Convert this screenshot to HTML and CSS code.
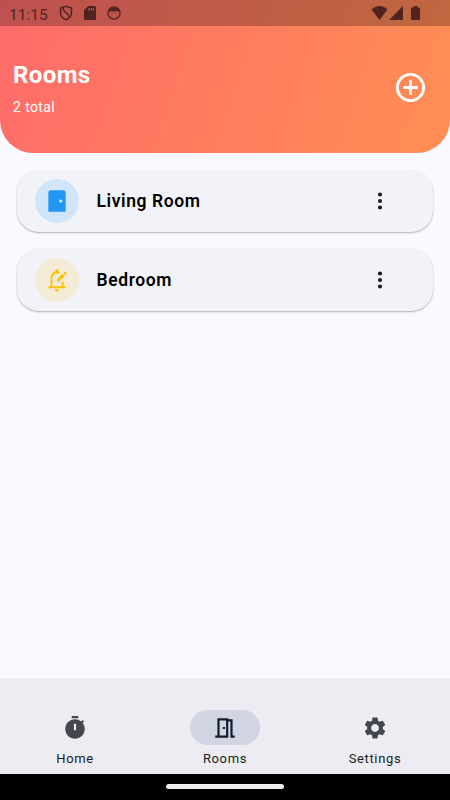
FILE: index.html
```html
<!DOCTYPE html>
<html lang="en">
<head>
    <meta charset="UTF-8">
    <meta name="viewport" content="width=device-width, initial-scale=1.0">
    <title>Rooms</title>
    <link rel="stylesheet" href="styles.css">
</head>
<body>

<header class="header">
    <div class="status-bar">
        <span class="time">11:15</span>
        <svg class="status-shield" viewBox="0 0 14 16" fill="none" stroke="currentColor" stroke-width="1.5">
            <path d="M7 1.200 1.500 3v4.500c0 3.500 2.200 6 5.500 7.300 3.300-1.300 5.500-3.800 5.500-7.300V3Z"/>
            <path d="M4 2.500C3.500 8 9.500 6.500 10.500 12.500"/>
        </svg>
        <svg class="status-sd" viewBox="0 0 12 14" fill="currentColor">
            <path fill-rule="evenodd" d="M4.200 0H10.500Q12 0 12 1.500V12.500Q12 14 10.500 14H1.500Q0 14 0 12.500V4.200ZM4.500 2v2.500h1.200V2ZM6.800 2v2.500H8V2ZM9 2v2.500h1.200V2Z"/>
        </svg>
        <svg class="status-face" viewBox="0 0 14 14">
            <circle cx="7" cy="7" r="6.100" fill="none" stroke="currentColor" stroke-width="1.300"/>
            <path d="M2 6Q1.800 2 7 1.500 12.200 2 12 6L9.500 5 7 5.800 4.500 5Z" fill="currentColor"/>
            <path d="M4.500 7.500h1M8.500 7.500h1" stroke="currentColor" stroke-width=".8"/>
        </svg>
        <div class="status-right">
            <svg class="status-wifi" viewBox="0 0 16 14" fill="currentColor"><path d="M8 14 0 3.600Q3.500 0 8 0t8 3.600Z"/></svg>
            <svg class="status-signal" viewBox="0 0 14 14" fill="currentColor"><path d="M0 14 14 0v14Z"/></svg>
            <svg class="status-battery" viewBox="0 0 9 14" fill="currentColor"><path d="M2.500 0h4v1.500H8q1 0 1 1V13q0 1-1 1H1q-1 0-1-1V2.500q0-1 1-1h1.500Z"/></svg>
        </div>
    </div>
    <div class="header-content">
        <div>
            <h1>Rooms</h1>
            <p>2 total</p>
        </div>
        <button class="add" aria-label="Add room">
            <svg viewBox="0 0 24 24" fill="currentColor"><path d="M13 7h-2v4H7v2h4v4h2v-4h4v-2h-4V7zm-1-5C6.480 2 2 6.480 2 12s4.480 10 10 10 10-4.480 10-10S17.520 2 12 2zm0 18c-4.410 0-8-3.590-8-8s3.590-8 8-8 8 3.590 8 8-3.590 8-8 8z"/></svg>
        </button>
    </div>
</header>

<main class="rooms">
    <div class="room">
        <div class="avatar blue">
            <svg class="icon" viewBox="0 0 24 24" fill="currentColor"><path d="M20 4c0-1.100-.9-2-2-2H6c-1.100 0-2 .9-2 2v18h16V4zm-4.500 9.500c-.83 0-1.500-.67-1.500-1.500s.67-1.500 1.500-1.500 1.500.67 1.500 1.500-.67 1.500-1.500 1.500z"/></svg>
        </div>
        <span class="room-name">Living Room</span>
        <button class="more" aria-label="More">
            <svg class="icon" viewBox="0 0 24 24" fill="currentColor"><circle cx="12" cy="6" r="1.900"/><circle cx="12" cy="12" r="1.900"/><circle cx="12" cy="18" r="1.900"/></svg>
        </button>
    </div>
    <div class="room">
        <div class="avatar amber">
            <svg class="icon" viewBox="0 0 24 24" fill="currentColor">
                <path d="M4 19.500v-1.800h2v-7.700c0-2.790 1.910-5.140 4.500-5.800v-.7a1.500 1.500 0 0 1 3 0v.7c.5.130.97.320 1.400.56L13.300 6.200A4.300 4.300 0 0 0 7.700 10v7.700h8.600V13.500H18v4.200h2v1.800ZM10 20.500h4a2 2 0 0 1-4 0Z"/>
                <path d="M12 13.300v-2l5-5 2 2-5 5ZM17.800 5.500l1-1q.5-.5 1 0l1 1q.5.500 0 1l-1 1Z"/>
            </svg>
        </div>
        <span class="room-name">Bedroom</span>
        <button class="more" aria-label="More">
            <svg class="icon" viewBox="0 0 24 24" fill="currentColor"><circle cx="12" cy="6" r="1.900"/><circle cx="12" cy="12" r="1.900"/><circle cx="12" cy="18" r="1.900"/></svg>
        </button>
    </div>
</main>

<nav class="bottom-nav">
    <a class="nav-item">
        <span class="pill"><svg class="icon" viewBox="0 0 24 24" fill="currentColor"><path d="M15 1H9v2h6V1zm4.030 6.390 1.420-1.420c-.43-.51-.9-.99-1.410-1.410l-1.420 1.420C16.070 4.740 14.120 4 12 4c-4.970 0-9 4.030-9 9s4.020 9 9 9 9-4.030 9-9c0-2.120-.74-4.070-1.970-5.610zM13 14h-2V8h2v6z"/></svg></span>
        <span>Home</span>
    </a>
    <a class="nav-item active">
        <span class="pill"><svg class="icon" viewBox="0 0 24 24" fill="currentColor"><path fill-rule="evenodd" d="M19 19V4h-4V3H5v16H3v2h12V6h2v15h4v-2ZM13 19H7V5h6ZM10 11h2v2h-2Z"/></svg></span>
        <span>Rooms</span>
    </a>
    <a class="nav-item">
        <span class="pill"><svg class="icon" viewBox="0 0 24 24" fill="currentColor"><path d="M19.140 12.940c.04-.3.060-.61.060-.94 0-.32-.02-.64-.07-.94l2.030-1.580c.18-.14.230-.41.120-.61l-1.920-3.320c-.12-.22-.37-.29-.59-.22l-2.390.960c-.5-.38-1.030-.7-1.620-.94l-.36-2.540c-.04-.24-.24-.41-.48-.41h-3.840c-.24 0-.43.170-.47.410l-.36 2.540c-.59.240-1.130.570-1.620.940l-2.390-.96c-.22-.08-.47 0-.59.220L2.740 8.870c-.12.210-.08.470.120.610l2.030 1.580c-.05.300-.09.630-.09.940s.02.640.070.940l-2.030 1.580c-.18.140-.23.410-.12.610l1.920 3.320c.12.220.370.290.590.220l2.390-.96c.5.380 1.030.700 1.620.940l.36 2.540c.05.240.240.410.480.410h3.840c.24 0 .44-.17.470-.41l.36-2.540c.59-.24 1.130-.56 1.620-.94l2.390.960c.22.080.470 0 .59-.22l1.920-3.320c.12-.22.070-.47-.12-.61l-2.010-1.580zM12 15.600c-1.980 0-3.600-1.620-3.600-3.600s1.620-3.600 3.600-3.600 3.600 1.620 3.600 3.600-1.620 3.600-3.600 3.600z"/></svg></span>
        <span>Settings</span>
    </a>
</nav>

<div class="gesture-bar"><div class="gesture-handle"></div></div>

</body>
</html>
```
FILE: styles.css
```css
* {
    box-sizing: border-box;
}

body {
    margin: 0;
    height: 800px;
    display: flex;
    flex-direction: column;
    background-color: #faf9ff;
    font-family: Roboto, sans-serif;
    overflow: hidden;
}

button {
    padding: 0;
    border: none;
    background: none;
    cursor: pointer;
}

svg {
    display: block;
    flex-shrink: 0;
}

.icon {
    width: 26px;
    height: 26px;
}

/* Header */
.header {
    height: 153px;
    background: linear-gradient(109deg, #ff6b6b, #ff8e53);
    border-radius: 0 0 33px 33px;
    color: white;
    overflow: hidden;
}

.status-bar {
    display: flex;
    align-items: center;
    height: 26px;
    padding: 0 30px 0 9px;
    background-color: rgba(0, 0, 0, 0.25);
    color: #4f241f;
}

.time {
    width: 50px;
    font-size: 15.5px;
    font-weight: 400;
    line-height: 24px;
    padding-top: 3px;
}

.status-shield {
    width: 14px;
    height: 16px;
}

.status-sd {
    width: 12px;
    height: 14px;
    margin-left: 11px;
}

.status-face {
    width: 14px;
    height: 14px;
    margin-left: 11px;
}

.status-right {
    display: flex;
    margin-left: auto;
}

.status-wifi {
    width: 17px;
    height: 14px;
}

.status-signal {
    width: 14px;
    height: 14px;
    margin-left: 1px;
}

.status-battery {
    width: 9px;
    height: 14px;
    margin-left: 8px;
}

.header-content {
    display: flex;
    justify-content: space-between;
    padding: 33px 22px 0 13px;
}

.header h1 {
    margin: 0;
    font-size: 24px;
    line-height: 32px;
    font-weight: 700;
    letter-spacing: 0.4px;
}

.header p {
    margin: 6px 0 0;
    font-size: 14px;
    line-height: 20px;
    font-weight: 450;
    letter-spacing: 0.4px;
}

.add {
    width: 35px;
    height: 35px;
    margin-top: 11px;
    color: white;
}

/* Room list */
.rooms {
    flex: 1;
    display: flex;
    flex-direction: column;
    gap: 17px;
    padding: 17px;
}

.room {
    display: flex;
    align-items: center;
    height: 62px;
    padding: 0 40px 0 18px;
    background-color: #f2f3f9;
    border-radius: 22px;
    box-shadow: 0 1px 2px rgba(0, 0, 0, 0.3);
}

.avatar {
    display: flex;
    align-items: center;
    justify-content: center;
    width: 44px;
    height: 44px;
    border-radius: 50%;
}

.blue {
    background-color: #d2e4f8;
    color: #2196f3;
}

.amber {
    background-color: #f4ebd6;
    color: #ffc107;
}

.room-name {
    flex: 1;
    margin-left: 17.5px;
    font-size: 17.5px;
    font-weight: 600;
    letter-spacing: 0.6px;
    color: #000;
}

.more {
    color: #191c20;
}

/* Bottom navigation */
.bottom-nav {
    display: flex;
    height: 96px;
    padding-top: 32px;
    background-color: #edecf2;
}

.nav-item {
    flex: 1;
    display: flex;
    flex-direction: column;
    align-items: center;
    font-size: 13px;
    line-height: 18px;
    font-weight: 450;
    letter-spacing: 0.65px;
    color: #191c20;
}

.pill {
    display: flex;
    align-items: center;
    justify-content: center;
    width: 70px;
    height: 35px;
    margin-bottom: 5px;
    border-radius: 18px;
    color: #44474e;
}

.active .pill {
    background-color: #d0d4e3;
    color: #101c2b;
}

.gesture-bar {
    display: flex;
    justify-content: center;
    height: 26px;
    padding-top: 10px;
    background-color: #000;
}

.gesture-handle {
    width: 118px;
    height: 5px;
    border-radius: 3px;
    background-color: #eeecee;
}
```
